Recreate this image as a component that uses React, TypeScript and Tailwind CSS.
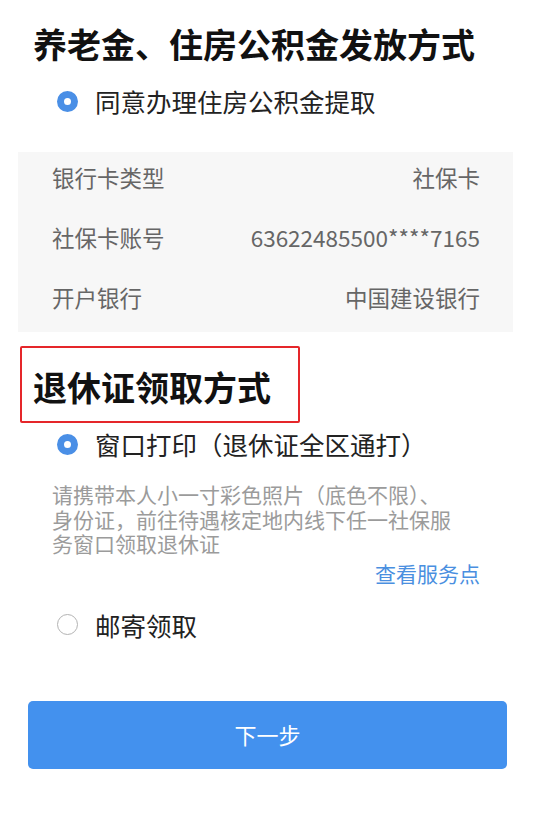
import React from "react";

const font = { fontFamily: '"Noto Sans CJK SC", "Noto Sans", sans-serif' };

function Radio({ checked, label }: { checked?: boolean; label: string }) {
  return (
    <div className="flex h-full items-center">
      <span className="ml-[57px] flex w-[38px] shrink-0">
        {checked ? (
          <span className="h-[21px] w-[21px] shrink-0 rounded-full border-[7px] border-[#4a8fe6] bg-white" />
        ) : (
          <span className="h-[21px] w-[21px] shrink-0 rounded-full border border-[#b3b3b3] bg-white" />
        )}
      </span>
      <span className="text-[25.5px] leading-none text-[#222]">{label}</span>
    </div>
  );
}

export default function App() {
  const rows = [
    { label: "银行卡类型", value: "社保卡" },
    { label: "社保卡账号", value: "63622485500****7165" },
    { label: "开户银行", value: "中国建设银行" },
  ];

  return (
    <div className="min-h-[825px] bg-white pt-[20px]" style={font}>
      <h1 className="h-[48px] px-[33px] text-[34px] font-bold leading-[48px] text-[#111]">
        养老金、住房公积金发放方式
      </h1>
      <div className="mt-[9px] h-[48px]">
        <Radio checked label="同意办理住房公积金提取" />
      </div>

      <div className="mx-[18px] mt-[27px] flex w-[495px] flex-col gap-[8px] bg-[#f7f7f7] pb-[8px]">
        {rows.map((row) => (
          <div
            key={row.label}
            className="flex h-[52px] items-center justify-between pl-[34px] pr-[33px] text-[22.5px] text-[#666]"
          >
            <span>{row.label}</span>
            <span>{row.value}</span>
          </div>
        ))}
      </div>

      <div className="ml-[20px] mt-[14px] flex h-[77px] w-[280px] items-center rounded-[2px] border-2 border-[#e5262a] pl-[11px] pt-[5px]">
        <h2 className="text-[34px] font-bold leading-none text-[#111]">退休证领取方式</h2>
      </div>
      <div className="h-[42px]">
        <Radio checked label="窗口打印（退休证全区通打）" />
      </div>

      <p className="ml-[52px] mt-[17px] w-[402px] text-[21px] leading-[24.5px] text-[#9b9b9b]">
        请携带本人小一寸彩色照片（底色不限）、身份证，前往待遇核定地内线下任一社保服务窗口领取退休证
      </p>
      <div className="mt-[5px] flex justify-end pr-[56px]">
        <a className="text-[21px] leading-[24px] text-[#4a8fe0]">查看服务点</a>
      </div>

      <div className="mt-[16px] h-[48px]">
        <Radio label="邮寄领取" />
      </div>

      <button className="ml-[28px] mt-[52px] flex h-[68px] w-[479px] items-center justify-center rounded-[5px] bg-[#4391ee] text-[22px] text-white">
        下一步
      </button>
    </div>
  );
}
